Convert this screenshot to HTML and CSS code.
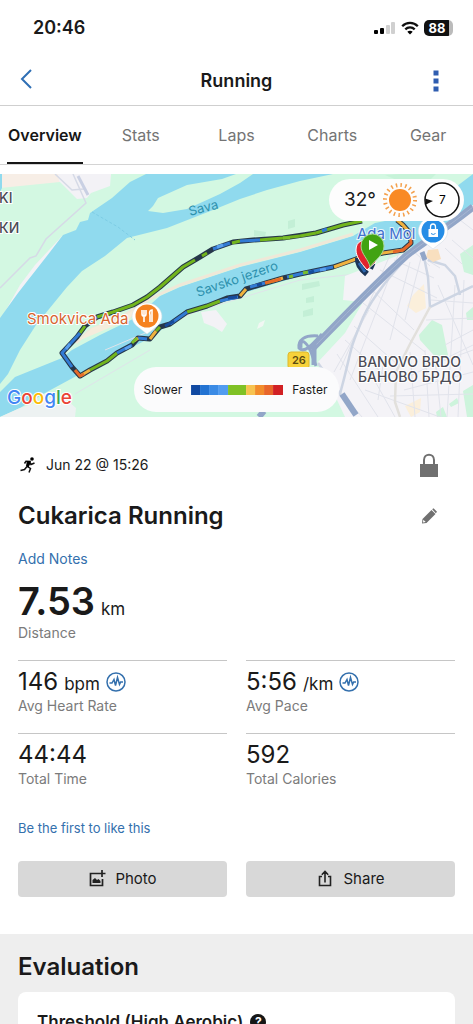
FILE: index.html
```html
<!DOCTYPE html>
<html lang="en">
<head>
<meta charset="utf-8">
<meta name="viewport" content="width=device-width, initial-scale=1">
<title>Running</title>
<link rel="stylesheet" href="styles.css">
</head>
<body>
<div class="app">
  <div class="status">
    <span class="status-time">20:46</span>
    <div class="status-icons">
      <svg class="signal" viewBox="0 0 22 14" aria-hidden="true"><rect x="0" y="9" width="4" height="4" rx="1"/><rect x="6" y="7" width="4" height="6" rx="1"/><rect x="12" y="4" width="4" height="9" rx="1" fill="#d0d0d0"/><rect x="17" y="1" width="4" height="12" rx="1" fill="#d0d0d0"/></svg>
      <svg class="wifi" viewBox="0 0 18 14" aria-hidden="true"><g fill="none" stroke="#111" stroke-width="2.3"><path d="M1.2 5.2C5.5 .8 12.500 .8 16.800 5.200"/><path d="M4.300 8.400c2.600-2.600 6.800-2.600 9.400 0"/></g><path d="M9 13.500 6.300 10.800c1.500-1.400 3.900-1.400 5.400 0z"/></svg>
      <span class="battery">88</span>
    </div>
  </div>

  <header class="header">
    <button class="icon-button back-button" type="button" aria-label="Back">
      <svg class="back" viewBox="0 0 12 20" aria-hidden="true"><path d="M11 1 2 10l9 9" fill="none" stroke="#2f6fb5" stroke-width="2"/></svg>
    </button>
    <h1 class="header-title">Running</h1>
    <button class="icon-button menu-button" type="button" aria-label="More options">
      <svg class="dots" viewBox="0 0 6 22" aria-hidden="true"><path d="M.5.500h5v5h-5zM.5 8.500h5v5h-5zM.5 16.500h5v5h-5z" fill="#2f5db0"/></svg>
    </button>
  </header>

  <nav class="tabs">
    <a class="tab tab-active" href="#overview" aria-current="page">Overview</a>
    <a class="tab" href="#stats">Stats</a>
    <a class="tab" href="#laps">Laps</a>
    <a class="tab" href="#charts">Charts</a>
    <a class="tab" href="#gear">Gear</a>
  </nav>

  <main class="content" id="overview">
    <section class="map" aria-label="Route map">
      <svg class="map-canvas" viewBox="0 174 473 243" preserveAspectRatio="xMidYMid slice">
        <rect y="174" width="473" height="243" fill="#d3f8e2"/>
        <path d="M0 174H111L108 185 90 190 86 197 70 183 60 182 30 185 0 188z" fill="#f7eee6"/>
        <path d="M58 174h53l-1 12-19 7-4 5-10 1-18-18z" fill="#f3f2f6"/>
        <path d="M63 235 35 265 20 285 2 317 28 280 55 250z" fill="#f3f2f6"/>
        <path d="M0 288 30 258 36 256 46 239 86 203 73 174M55 174 72 190 84 189" fill="none" stroke="#d6dae6" stroke-width="1.500"/>
        <path d="M78 176 88 195" stroke="#c9d0e3" stroke-width="3"/>
        <!-- Sava -->
        <path d="M146 174 130 182 112 198 90 213 88 220 80 222 76 230 63 235 50 252 18 293 0 318V384L8 374 20 350 36 325 67 287 82 271 105 256 127 238 167 228 213 210 240 199 267 190 300 181 333 174z" fill="#90daee"/>
        <path d="M148 211 153 206 158 198 187 185 222 179 236 174H253L240 183 220 194 187 209 163 213z" fill="#d3f8e2"/>
        <path d="M92 212 118 227 135 240" fill="none" stroke="#7dcde5" stroke-dasharray="3 2"/>
        <path d="M0 174h2v14l-2 4z" fill="#90daee"/>
        <!-- Savsko jezero -->
        <path d="M0 392 15 377 62 358 72 350 100 335 135 318 160 296 180 287 240 267 300 252 353 236 375 223 420 214 473 174V206L445 226 420 245 350 262 300 276 240 294 195 310 175 320 150 338 80 374 45 393 20 408 0 417z" fill="#90daee"/>
        <path d="M76 343 90 330 120 318 148 300 160 294 180 285 240 265 300 250 353 234" fill="none" stroke="#efe8d8" stroke-width="3"/>
        <path d="M78 341 92 328 124 316 145 303 128 320z" fill="#f5ecdc"/>
        <path d="M0 417H75L76 408 67 400 50 398 20 408z" fill="#edf2f2"/>
        <path d="M75 394 150 350M105 350 195 312 300 280 356 274" fill="none" stroke="#dfe4ea" stroke-width="1"/>
        <path d="M201 312 216 310 227 324 222 332 214 327 204 323z" fill="#f3f2f6"/>
        <path d="M259 323l6-3-2 6-6 3z" fill="#f1f7f3"/>
        <path d="M302 284l17-3 1 5-18 4zM306 298l8-2v6l-8 1zM303 311l10-3v7l-10 2zM288 221l7-2v8l-7 2zM254 230l12 2-1 5-11-1z" fill="#c3efd6"/>
        <!-- Banovo Brdo -->
        <path d="M345 276 420 247 473 205V417H345L330 385 318 362 345 333 363 302 343 300z" fill="#f4f3f7"/>
        <path d="M385 175 420 190 436 174H400z" fill="#c7f3d9"/>
        <g fill="#cdf4dc">
          <path d="M460 254 473 245V275L464 272z"/><path d="M419 335 432 320 442 325 448 355 440 362 420 340z"/><path d="M466 313 473 307V320H467z"/><path d="M449 404 457 398 459 403 451 407zM463 391 473 385V417H467zM436 412l7-5 4 10h-10z"/>
        </g>
        <path d="M413 295 424 284 426 308 416 313 407 306zM405 406 421 398 420 412 411 417z" fill="#fbefdb"/>
        <g fill="none" stroke="#e1e3eb" stroke-width="1">
          <path d="M370 288 414 330M363 303 425 352M354 326 398 365M345 340 390 380M337 354 378 417M380 270 437 298M394 260 434 278M412 250 430 266M325 374 362 417M390 255 340 370M400 250 350 380M410 262 390 340M421 258 405 320M369 310 334 372M455 285 447 417M464 280 458 417M438 285 473 365M445 345 473 330M440 362 473 350M402 380 473 345M404 390 473 372M390 396 473 394M365 390 440 417M371 374 395 417M426 320 473 318M431 300 473 303M427 260 440 268M445 248 462 264M452 240 473 258M383 365 378 400M410 352 415 417M425 350 429 417M435 358 441 417M460 220 473 230"/>
        </g>
        <g fill="none" stroke="#cdd5e3" stroke-width="2.500">
          <path d="M415 249C390 275 368 302 360 325C348 354 352 350 340 394L318 363"/>
          <path d="M423 252 428 277 430 307 473 286M428 260 445 265 455 276 460 295"/>
          <path d="M430 307 410 344 396 372 395 402 400 417" stroke="#e2e0dc"/>
        </g>
        <path d="M428 250 438 249 441 259 433 262 426 257z" fill="#f8dfbf"/>
        <g fill="none" stroke="#92a6c8">
          <path d="M473 207C443 231 422 243 406 256C373 285 330 331 310 351" stroke-width="7"/>
          <path d="M473 207C443 231 422 243 406 256C373 285 330 331 310 351" stroke="#a6b6d2"/>
          <path d="M318 336C304 335 298 340 299 348C304 354 312 345 322 334M301 348C300 337 306 341 311 352L316 366" stroke-width="3"/>
          <path d="M314 344 314 365M422 252 425 260" stroke-width="5"/>
          <path d="M342 394 356 415" stroke-width="6"/><path d="M259 417 264 411" stroke-width="6"/>
        </g>
        <!-- pace-coloured route -->
        <g fill="none" stroke-linejoin="round">
          <path d="M397 220 403 225 410 233 411 243 403 250 383 253 356 259 333 267 300 274 283 278 266 283 246 289 240 296 227 298 207 306 187 312 170 324 160 327 150 339 138 338 132 345 117 353 107 361 90 370 80 376 72 367 62 353 77 337 85 326 97 317 113 312 133 305 147 297 160 287 183 267 200 257 213 249 233 242 253 240 283 238 316 233 343 225 362 221" stroke="#26374a" stroke-width="5"/>
          <g stroke-width="3">
            <path d="M362 221 343 225 316 233M97 317 113 312 133 305 147 297 160 287 183 267 195 260M202 256 207 253M232 243 240 241M260 240 283 238 300 236M85 326 80 333M90 370 107 361 117 353M187 312 207 306 220 301M160 327 156 331M266 283 273 281" stroke="#72b51d"/>
            <path d="M322 231 327 229M260 240 240 241M230 243 213 249M97 317 90 322M80 333 62 353 72 367M117 353 132 345M147 339 138 338M170 324 187 312M220 301 238 297M333 267 300 274 287 277M265 283 250 287" stroke="#327bd4"/>
            <path d="M316 233 300 236" stroke="#72b51d"/>
            <path d="M165 326 174 321M228 298 237 297M320 270 326 269M309 273 314 271M257 285 262 284" stroke="#164c9c"/>
            <path d="M397 220 403 225 410 233M403 250 383 253 356 259 334 267M283 278 273 281M246 289 240 296M80 376 90 370M150 339 156 331M138 338 134 341" stroke="#efb13f"/>
            <path d="M410 233 411 243 403 250 393 252M265 283 281 279M84 374 80 376 75 370" stroke="#e56a2a"/>
            <path d="M320 270 326 269M125 349 131 346M217 247 223 245M70 344 66 349" stroke="#5aa0ee"/>
            <path d="M303 273 308 272M289 277 293 276M132 343 137 338M290 238 283 238" stroke="#79bd2c"/>
          </g>
          <path d="M358 258C357 265 362 270 367 274M361 261 374 267" stroke="#1c3558" stroke-width="6"/>
          <path d="M359 263 365 272" stroke="#2c66ae" stroke-width="3"/>
        </g>
        <g class="water-label">
          <text transform="translate(190 216) rotate(-15)">Sava</text>
          <text transform="translate(198 297) rotate(-19)">Savsko jezero</text>
        </g>
        <g class="district-label">
          <text x="-1" y="203">KI</text><text x="-1" y="233">КИ</text>
          <text x="358" y="367">BANOVO BRDO</text><text x="358" y="382">БАНОВО БРДО</text>
        </g>
        <text class="place-label poi-food" x="27" y="324">Smokvica Ada</text>
        <text class="place-label poi-mall" x="357" y="239">Ada Mol</text>
        <!-- restaurant pin -->
        <path d="M147 334 138 327C126 318 134 303 147 303S168 318 156 327z" fill="#fff" stroke="#d7dfdf" stroke-width=".5"/>
        <circle cx="147" cy="316" r="11.500" fill="#f58220"/>
        <path d="M142 310v4c0 3 4 3 4 0v-4M144 310v12M150 322v-7c-1-3 0-5 2-5v12" fill="none" stroke="#fff" stroke-width="1.600"/>
        <!-- shopping pin -->
        <path d="M433 249 424 242C412 232 421 217 433 217S454 232 442 242z" fill="#fff" stroke="#cdd8e2" stroke-width=".5"/>
        <circle cx="433" cy="231" r="11.500" fill="#258de6"/>
        <path d="M428.500 229h9.500v8h-9.500z" fill="#fff"/><path d="M430.500 229v-2c0-4 5-4 5 0v2" fill="none" stroke="#fff" stroke-width="1.300"/><path d="M431 233.500q2.200 2 4.500 0" fill="none" stroke="#258de6"/>
        <!-- finish and start pins -->
        <path d="M367 270C360 262 356 256 356 250C356 241 363 239 369 242L376 262z" fill="#e2242e" stroke="#fff"/>
        <path d="M370 267C369 260 361 254 361 246A11.500 12 0 0 1 384 246C384 255 375 260 370 267z" fill="#41a312" stroke="#a9d794"/>
        <path d="M369 240v10l9-5z" fill="#fff"/>
        <!-- road shield -->
        <rect x="288" y="352" width="21" height="17" rx="3" fill="#f7d23b" stroke="#e0b82c"/>
        <text class="shield-label" x="292" y="364">26</text>
        <text class="google" x="7" y="404"><tspan fill="#4285f4">G</tspan><tspan fill="#ea4335">o</tspan><tspan fill="#fbbc05">o</tspan><tspan fill="#4285f4">g</tspan><tspan fill="#34a853">l</tspan><tspan fill="#ea4335">e</tspan></text>
      </svg>
      <div class="weather">
        <span class="temperature">32°</span>
        <svg class="sun" viewBox="-18 -18 36 36" aria-label="Sunny"><circle r="11" fill="#f98a25"/><circle r="15" fill="none" stroke="#f4a14d" stroke-width="4" stroke-dasharray="1.500 3.212"/></svg>
        <svg class="wind" viewBox="-18 -18 36 36" aria-label="Wind 7"><circle r="17" fill="#fff" stroke="#111" stroke-width="1.500"/><path d="M-17-1.500-9 1-16 4.500z" fill="#111"/><text x="-3" y="4">7</text></svg>
      </div>
      <div class="legend">
        <span>Slower</span>
        <svg class="scale" viewBox="0 0 92 10" preserveAspectRatio="none" aria-hidden="true"><path d="M0 0h9v10H0z" fill="#1149a2"/><path d="M9 0h9v10H9z" fill="#2373d2"/><path d="M18 0h9v10h-9z" fill="#3b8be5"/><path d="M27 0h10v10H27z" fill="#519cf0"/><path d="M37 0h18v10H37z" fill="#7fc125"/><path d="M55 0h9v10h-9z" fill="#f7c350"/><path d="M64 0h9v10h-9z" fill="#f28c2b"/><path d="M73 0h9v10h-9z" fill="#e8662a"/><path d="M82 0h10v10H82z" fill="#d12024"/></svg>
        <span>Faster</span>
      </div>
    </section>

    <section class="summary">
      <div class="row">
        <div class="date">
          <svg class="runner" viewBox="0 0 16 16" aria-hidden="true"><circle cx="12" cy="2" r="1.800"/><path d="M4.500 6.500 6 4.200 10 4.500 7.500 9.500 10.500 11.500 9 15.500M9.500 5 11 7.500 14.500 6M7 9.500 4.500 12.500.5 13.500" fill="none" stroke="#111" stroke-width="1.500"/><path d="M7 4 10.500 4 10.500 6 8.500 10.500 6 9z"/></svg>
          <span>Jun 22 @ 15:26</span>
        </div>
        <button class="icon-button edit-button" type="button" aria-label="Privacy">
          <svg class="lock" viewBox="0 0 18 24" aria-hidden="true"><path d="M0 11h18v13H0z" fill="#707070"/><path d="M4 11V7c0-7 10-7 10 0v4" fill="none" stroke="#707070" stroke-width="2"/></svg>
        </button>
      </div>
      <div class="row title-row">
        <h2 class="title">Cukarica Running</h2>
        <button class="icon-button edit-button" type="button" aria-label="Edit title">
          <svg class="pencil" viewBox="0 0 16 16" aria-hidden="true"><path d="m1.500 11 9-9 4 4-9 9-4.500.500z" fill="#707070"/><path d="m11.200 1.300 1.300-1 3.500 3.500-1.200 1.400z" fill="#707070"/><path d="m2.300 11.700 2.400 2.400-2.700.400z" fill="#fff"/></svg>
        </button>
      </div>
      <a class="notes" href="#notes">Add Notes</a>
      <div class="distance"><span>7.53</span> <span class="unit">km</span></div>
      <div class="label">Distance</div>

      <div class="metrics">
        <div class="metric">
          <div class="value">146 <span class="unit">bpm</span> <svg class="pulse" viewBox="0 0 20 20" aria-hidden="true"><circle cx="10" cy="10" r="9"/><path d="M3.500 11H6L8 7.500l1.500 6 2-8 2 7 1.200-2.500H17"/></svg></div>
          <div class="label">Avg Heart Rate</div>
        </div>
        <div class="metric">
          <div class="value">5:56 <span class="unit">/km</span> <svg class="pulse" viewBox="0 0 20 20" aria-hidden="true"><circle cx="10" cy="10" r="9"/><path d="M3.500 11H6L8 7.500l1.500 6 2-8 2 7 1.200-2.500H17"/></svg></div>
          <div class="label">Avg Pace</div>
        </div>
        <div class="metric">
          <div class="value">44:44</div>
          <div class="label">Total Time</div>
        </div>
        <div class="metric">
          <div class="value">592</div>
          <div class="label">Total Calories</div>
        </div>
      </div>

      <a class="like" href="#like">Be the first to like this</a>
      <div class="actions">
        <button class="action" type="button"><svg class="action-icon" viewBox="0 0 18 18" aria-hidden="true"><path d="M10.500 3.500H2.500v12h12V9M14 0v7M10.500 3.500h7" fill="none" stroke="#222" stroke-width="1.700"/><path d="M4.500 13V10l2.500-2 2 2 1.500-1 2 2v2z" fill="#222"/></svg>Photo</button>
        <button class="action" type="button"><svg class="action-icon" viewBox="0 0 18 18" aria-hidden="true"><path d="M6 6.500H3.500v9h11v-9H12M9 12.500V2M5.800 4.700 9 1.500l3.200 3.200" fill="none" stroke="#222" stroke-width="1.600"/></svg>Share</button>
      </div>
    </section>

    <section class="evaluation">
      <h2 class="title">Evaluation</h2>
      <article class="card">
        <h3 class="card-title">Threshold (High Aerobic)</h3>
        <button class="help" type="button" aria-label="About threshold">?</button>
      </article>
    </section>
  </main>
</div>
</body>
</html>
```
FILE: styles.css
```css
* { box-sizing: border-box; }

body {
  margin: 0;
  background: #fff;
  color: #1a1a1a;
  font-family: Inter, "Liberation Sans", sans-serif;
  font-size: 14px;
  line-height: 20px;
}

h1, h2, h3 { margin: 0; }
a { text-decoration: none; }
button { font: inherit; color: inherit; border: 0; cursor: pointer; }
svg { display: block; flex: none; }

.app {
  display: flex;
  flex-direction: column;
  height: 100vh;
  overflow: hidden;
}

.status {
  display: flex;
  flex: none;
  align-items: center;
  justify-content: space-between;
  height: 56px;
  padding: 0 20px 0 33px;
}
.status-time { font-size: 18px; font-weight: 600; }
.status-icons { display: flex; align-items: center; gap: 5px; }
.signal { width: 22px; height: 14px; }
.wifi { width: 18px; height: 14px; }
.battery {
  width: 29px;
  height: 16px;
  padding-right: 3px;
  border-radius: 5px;
  background: linear-gradient(90deg, #111 86%, #bbb 86%);
  color: #fff;
  font-size: 13px;
  font-weight: 700;
  line-height: 16px;
  text-align: center;
}

.header {
  display: flex;
  flex: none;
  align-items: center;
  justify-content: space-between;
  height: 50px;
  padding: 0 14px;
  border-bottom: 1px solid #cfcfcf;
}
.header-title { font-size: 18px; font-weight: 600; line-height: 24px; }
.icon-button {
  display: flex;
  align-items: center;
  justify-content: center;
  width: 24px;
  height: 32px;
  padding: 0;
  background: none;
}
.menu-button { width: 46px; }
.back-button { width: 46px; justify-content: flex-start; padding: 0 0 4px 6px; }
.back { width: 12px; height: 20px; }
.dots { width: 6px; height: 22px; }

.tabs {
  display: grid;
  flex: none;
  grid-template-columns: repeat(5, 1fr);
  height: 59px;
  margin: 0 -3px;
  border-bottom: 1px solid #d4d4d4;
}
.tab {
  justify-self: center;
  height: 58px;
  padding: 0 1px;
  color: #747474;
  font-size: 16px;
  line-height: 58px;
}
.tab-active { border-bottom: 2px solid #161616; color: #161616; font-weight: 600; }

.content {
  flex: 1;
  min-height: 0;
  padding-top: 9px;
  overflow-y: auto;
  scrollbar-width: none;
}

.map { position: relative; height: 243px; overflow: hidden; }
.map-canvas { width: 100%; height: 100%; }
.place-label { font-size: 15px; }
.water-label { fill: #2d91ad; font-size: 13px; }
.district-label {
  fill: #4b4b55;
  font-size: 14px;
  font-weight: 500;
  stroke: #fff;
  stroke-width: 2px;
  paint-order: stroke;
}
.poi-food { fill: #d7642f; stroke: #fff; stroke-width: 2px; paint-order: stroke; }
.poi-mall { fill: #4270cf; stroke: #e9f7fb; stroke-width: 2px; paint-order: stroke; }
.shield-label { fill: #5b4b12; font-size: 11px; font-weight: 600; }
.google { font-size: 19px; font-weight: 500; stroke: #fff; stroke-width: 2px; paint-order: stroke; }

.weather {
  position: absolute;
  top: 5px;
  right: 9px;
  display: flex;
  align-items: center;
  gap: 6px;
  height: 42px;
  padding: 0 4px 0 15px;
  border-radius: 21px;
  background: #fdfdfd;
}
.temperature { font-size: 19px; }
.sun, .wind { width: 36px; height: 36px; }
.wind text { font-size: 12px; }

.legend {
  position: absolute;
  bottom: 5px;
  left: 50%;
  display: flex;
  align-items: center;
  gap: 9px;
  height: 45px;
  padding: 0 12px 0 10px;
  border-radius: 22px;
  background: #fbfbfc;
  font-size: 12px;
  transform: translateX(-50%);
}
.scale { width: 92px; height: 10px; }

.summary { padding: 36px 18px 37px; }
.row { display: flex; align-items: center; justify-content: space-between; height: 24px; }
.date { display: flex; align-items: center; gap: 10px; }
.runner { width: 16px; height: 16px; margin-left: 2px; }
.edit-button { margin-right: 14px; }
.lock { width: 18px; height: 24px; }
.pencil { width: 16px; height: 16px; }
.title-row { height: 32px; margin-top: 23px; }
.title { font-size: 24px; font-weight: 600; line-height: 32px; }
.notes { display: block; width: fit-content; margin-top: 17px; color: #3470ad; }
.distance {
  display: flex;
  align-items: baseline;
  gap: 6px;
  height: 42px;
  margin-top: 12px;
  font-size: 38px;
  font-weight: 600;
  line-height: 40px;
}
.unit { font-size: 17px; font-weight: 400; line-height: 20px; }
.label { color: #7b7b7b; }

.metrics {
  display: grid;
  grid-template-columns: 1fr 1fr;
  column-gap: 19px;
  margin-top: 17px;
}
.metric { padding: 7px 0 17px; border-top: 1px solid #c6c6c6; }
.value { display: flex; align-items: baseline; gap: 6px; height: 28px; font-size: 24px; line-height: 28px; }
.pulse { align-self: center; width: 20px; height: 20px; fill: none; stroke: #3470ad; stroke-width: 1.500; }

.like { display: block; width: fit-content; margin-top: 12px; color: #3470ad; font-size: 13px; }
.actions { display: grid; grid-template-columns: 1fr 1fr; gap: 19px; margin-top: 23px; }
.action {
  display: flex;
  align-items: center;
  justify-content: center;
  gap: 9px;
  height: 36px;
  border-radius: 4px;
  background: #d8d8d8;
  font-size: 15px;
}
.action-icon { width: 18px; height: 18px; }

.evaluation { padding: 17px 18px 24px; background: #eee; }
.card {
  display: flex;
  align-items: flex-start;
  gap: 7px;
  min-height: 160px;
  margin-top: 9px;
  padding: 18px 19px;
  border-radius: 8px;
  background: #fff;
}
.card-title { font-size: 17px; font-weight: 600; line-height: 24px; }
.help {
  width: 16px;
  height: 16px;
  margin-top: 4px;
  padding: 0;
  border-radius: 50%;
  background: #161616;
  color: #fff;
  font-size: 12px;
  font-weight: 700;
  line-height: 16px;
}
```
